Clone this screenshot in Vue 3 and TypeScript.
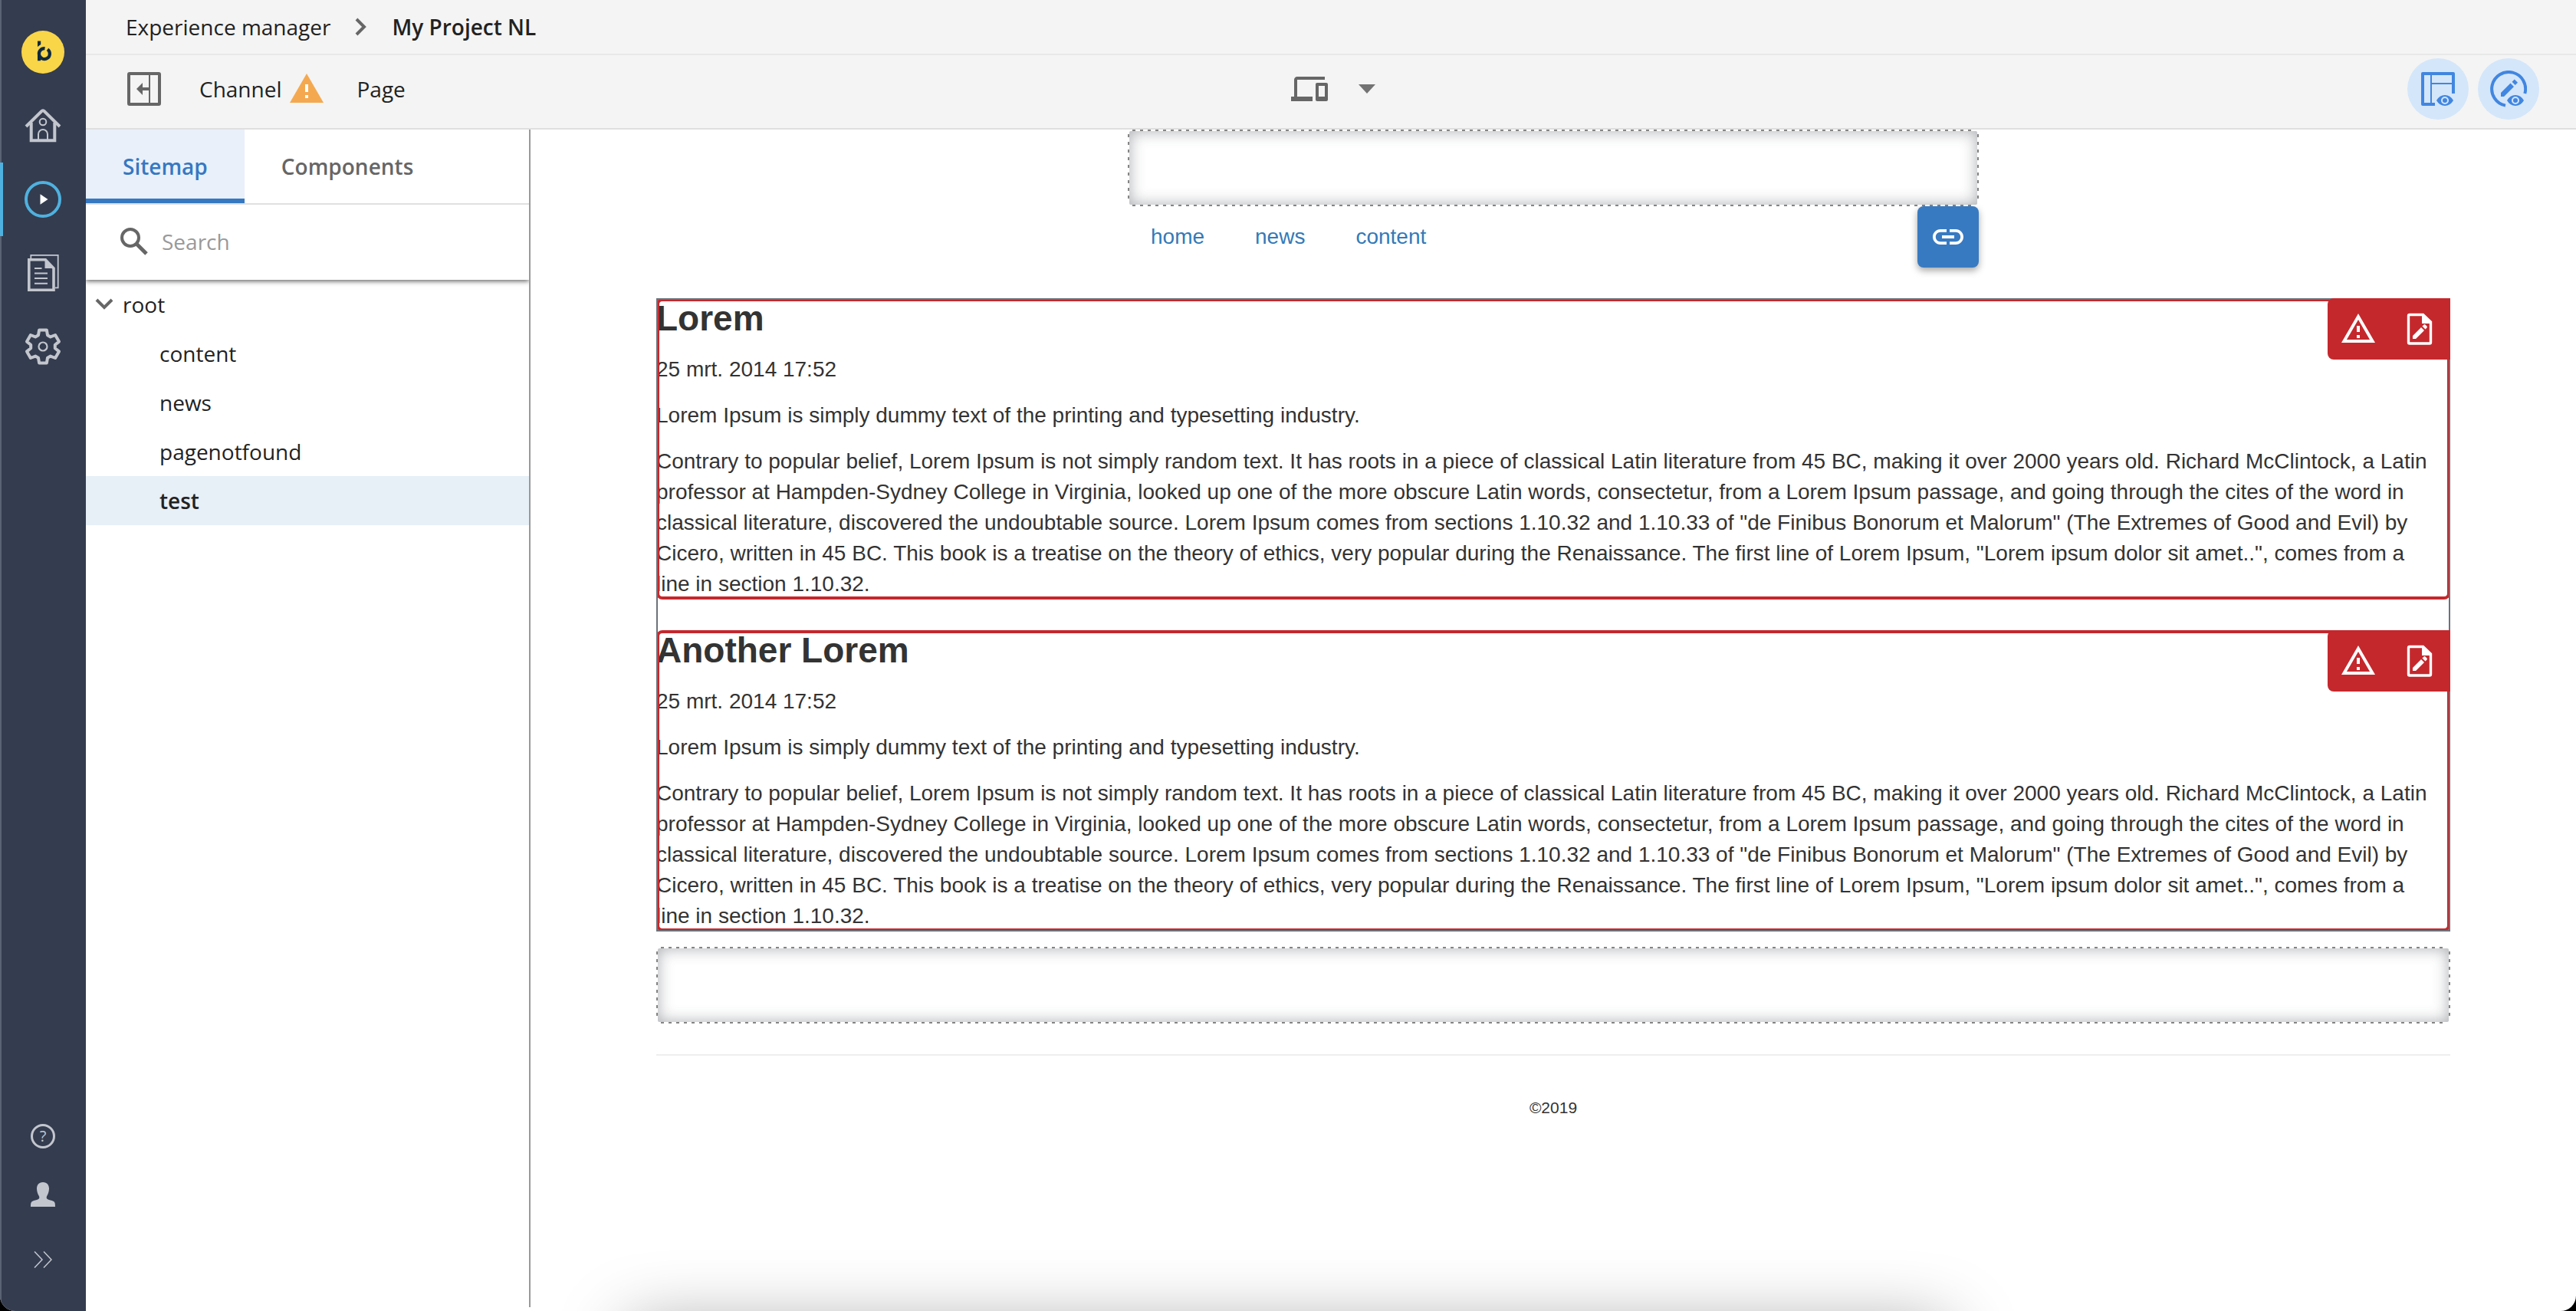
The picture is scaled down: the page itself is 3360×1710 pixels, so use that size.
<script setup lang="ts">
import { ref } from 'vue'

interface TreeItem {
  name: string
  level: number
}

interface Article {
  title: string
  date: string
  intro: string
  body: string
}

const tree: TreeItem[] = [
  { name: 'root', level: 0 },
  { name: 'content', level: 1 },
  { name: 'news', level: 1 },
  { name: 'pagenotfound', level: 1 },
  { name: 'test', level: 1 },
]
const selected = ref('test')
const tabs = ['Sitemap', 'Components']
const activeTab = ref('Sitemap')
const query = ref('')
const menu = ['home', 'news', 'content']

const body =
  'Contrary to popular belief, Lorem Ipsum is not simply random text. It has roots in a piece of classical Latin literature from 45 BC, making it over 2000 years old. Richard McClintock, a Latin professor at Hampden-Sydney College in Virginia, looked up one of the more obscure Latin words, consectetur, from a Lorem Ipsum passage, and going through the cites of the word in classical literature, discovered the undoubtable source. Lorem Ipsum comes from sections 1.10.32 and 1.10.33 of "de Finibus Bonorum et Malorum" (The Extremes of Good and Evil) by Cicero, written in 45 BC. This book is a treatise on the theory of ethics, very popular during the Renaissance. The first line of Lorem Ipsum, "Lorem ipsum dolor sit amet..", comes from a line in section 1.10.32.'

const articles: Article[] = ['Lorem', 'Another Lorem'].map((title) => ({
  title,
  date: '25 mrt. 2014 17:52',
  intro: 'Lorem Ipsum is simply dummy text of the printing and typesetting industry.',
  body,
}))

// Outline of a six-toothed gear centred in a 48-unit box.
const gearPath = (() => {
  const points: string[] = []
  const at = (radius: number, degrees: number) => {
    const a = ((degrees - 90) * Math.PI) / 180
    points.push(`${(24 + radius * Math.cos(a)).toFixed(1)} ${(24 + radius * Math.sin(a)).toFixed(1)}`)
  }
  for (let tooth = 0; tooth < 6; tooth++) {
    const c = tooth * 60
    at(16, c - 22)
    at(22, c - 13)
    at(22, c + 13)
    at(16, c + 22)
  }
  return `M${points.join('L')}Z`
})()
</script>

<template>
  <div class="app">
    <nav class="rail" aria-label="Main">
      <a class="logo" href="#" aria-label="Home page">
        <svg width="56" height="56" viewBox="0 0 56 56">
          <circle cx="28" cy="28" r="28" fill="#f9d548" />
          <path d="M21 13.5h4.2v4.6L21 21z" fill="#0f2a40" />
          <path d="M21 30v9.2h4v-2z" fill="#0f2a40" />
          <path d="M30.5 23.1A7 7 0 1 0 34 24.4" fill="none" stroke="#0f2a40" stroke-width="4.2" />
        </svg>
      </a>
      <button class="rail-item" type="button" aria-label="Home">
        <svg width="48" height="48" viewBox="0 0 48 48" fill="none" stroke="#c3c6cd">
          <path d="M2 25L22.500 4.800q1.500-1 3 0L46 25" stroke-width="4" />
          <path d="M8.700 20v23.200h30.600V20" stroke-width="4" />
          <circle cx="24" cy="19" r="4.300" stroke-width="2" />
          <path d="M18 45V35a6 6 0 0 1 12 0v10" stroke-width="2" />
        </svg>
      </button>
      <button class="rail-item active" type="button" aria-label="Experience manager">
        <svg width="48" height="48" viewBox="0 0 48 48">
          <circle cx="24" cy="24" r="22" fill="none" stroke="#4fb1df" stroke-width="4" />
          <path d="M20.500 17.300L30.500 24l-10 6.700z" fill="#fff" />
        </svg>
      </button>
      <button class="rail-item" type="button" aria-label="Documents">
        <svg width="48" height="48" viewBox="0 0 48 48" fill="none" stroke="#c3c6cd">
          <path d="M8.300 5V.900h35.400v42.500H40" stroke-width="1.800" />
          <path d="M5.800 6.800h21.500l10.700 11.200v28.200H5.800z" stroke-width="3.600" />
          <path d="M26.500 6v12H38z" fill="#c3c6cd" stroke="none" />
          <path d="M13 18h9.500M13 24.500h17M13 31h17M13 37.700h17" stroke-width="2" />
        </svg>
      </button>
      <button class="rail-item" type="button" aria-label="Setup">
        <svg width="48" height="48" viewBox="0 0 48 48" fill="none" stroke="#c3c6cd" stroke-linejoin="round">
          <path :d="gearPath" stroke-width="4" />
          <circle cx="24" cy="24" r="5.500" stroke-width="2.200" />
        </svg>
      </button>
      <div class="rail-bottom">
        <button class="help" type="button" aria-label="Help">?</button>
        <button class="rail-small" type="button" aria-label="User">
          <svg width="32" height="32" viewBox="0 0 32 32" fill="#c3c6cd">
            <path d="M16 0c5.500 0 8 3.800 8 8.500 0 4-1.600 7.300-2.800 9.500-.9 1.700-.7 3.500 1 4.300 2.200 1.100 5 1.500 7.300 2.500 2 .9 2.500 2.500 2.500 7.200H0c0-4.700.5-6.300 2.500-7.200 2.300-1 5.100-1.400 7.300-2.500 1.700-.8 1.900-2.600 1-4.300C9.600 15.800 8 12.500 8 8.500 8 3.800 10.500 0 16 0z" />
          </svg>
        </button>
        <button class="rail-small expand" type="button" aria-label="Expand">
          <svg width="24" height="22" viewBox="0 0 24 22" fill="none" stroke="#c3c6cd" stroke-width="1.500">
            <path d="M1 .500L11 11 1 21.500M13 .500L23 11 13 21.500" />
          </svg>
        </button>
      </div>
    </nav>

    <div class="workspace">
      <header class="breadcrumb">
        <a href="#">Experience manager</a>
        <svg width="16" height="24" viewBox="0 0 16 24" fill="none" stroke="#666" stroke-width="4">
          <path d="M2 2l10 10L2 22" />
        </svg>
        <strong>My Project NL</strong>
      </header>

      <div class="toolbar">
        <div class="toolbar-left">
          <button type="button" aria-label="Collapse panel">
            <svg width="44" height="44" viewBox="0 0 44 44">
              <rect x="2" y="2" width="40" height="40" rx="1" fill="none" stroke="#666" stroke-width="4" />
              <path d="M28 4h2v36h-2z" fill="#666" />
              <path d="M12 22l8-8v6h8v4h-8v6z" fill="#666" />
            </svg>
          </button>
          <button class="menu-button channel" type="button">
            Channel
            <svg width="48" height="48" viewBox="0 0 24 24">
              <path d="M12 2L1 21h22z" fill="#f4a950" />
              <path d="M11 9h2v5h-2zM11 16h2v2h-2z" fill="#fff" />
            </svg>
          </button>
          <button class="menu-button" type="button">Page</button>
        </div>
        <button class="device" type="button" aria-label="Viewport">
          <svg width="48" height="48" viewBox="0 0 24 24" fill="#666">
            <path d="M4 6h18V4H4c-1.100 0-2 .900-2 2v11H0v3h14v-3H4V6zm19 2h-6c-.550 0-1 .450-1 1v10c0 .550.450 1 1 1h6c.550 0 1-.450 1-1V9c0-.550-.450-1-1-1zm-1 9h-4v-7h4v7z" />
          </svg>
          <svg width="22" height="12" viewBox="0 0 22 12" fill="#737373"><path d="M0 0h22L11 12z" /></svg>
        </button>
        <div class="toolbar-right">
          <button class="toggle" type="button" aria-label="Show components">
            <svg width="48" height="48" viewBox="0 0 48 48">
              <path d="M44 30V4H4v40h16" fill="none" stroke="#4186e0" stroke-width="4" stroke-linejoin="round" />
              <path d="M14 5h2v38h-2zM16 16h27v2H16z" fill="#4186e0" />
              <path d="M22 39q4-7 11-7t11 7q-4 7-11 7t-11-7z" fill="#4186e0" />
              <circle cx="33" cy="39" r="4" fill="none" stroke="#d4e6fa" stroke-width="2" />
            </svg>
          </button>
          <button class="toggle" type="button" aria-label="Show content editing">
            <svg width="48" height="48" viewBox="0 0 48 48">
              <path d="M45.300 30A22 22 0 1 0 20 45.600" fill="none" stroke="#4186e0" stroke-width="4" />
              <path d="M14 34v-5l12.500-12.500 4.500 4.500L18 34zM28.500 14.800l3.300-3.300 4.200 4.200-3.300 3.300z" fill="#4186e0" />
              <path d="M22 39q4-7 11-7t11 7q-4 7-11 7t-11-7z" fill="#4186e0" />
              <circle cx="33" cy="39" r="4" fill="none" stroke="#d4e6fa" stroke-width="2" />
            </svg>
          </button>
        </div>
      </div>

      <div class="columns">
        <aside class="panel">
          <div class="tabs" role="tablist">
            <button
              v-for="tab in tabs"
              :key="tab"
              type="button"
              role="tab"
              class="tab"
              :class="{ current: tab === activeTab }"
              :aria-selected="tab === activeTab"
              @click="activeTab = tab"
            >
              {{ tab }}
            </button>
          </div>
          <label class="search">
            <svg width="36" height="36" viewBox="0 0 36 36" fill="none" stroke="#666">
              <circle cx="13" cy="13" r="11" stroke-width="4" />
              <path d="M21 21l13 13" stroke-width="5" />
            </svg>
            <input v-model="query" type="text" placeholder="Search" aria-label="Search" />
          </label>
          <ul class="tree">
            <li v-for="item in tree" :key="item.name">
              <button
                type="button"
                :class="['node', 'level-' + item.level, { selected: item.name === selected }]"
                @click="selected = item.name"
              >
                <svg v-if="item.level === 0" width="24" height="16" viewBox="0 0 24 16" fill="none" stroke="#666" stroke-width="4">
                  <path d="M2 2l10 10L22 2" />
                </svg>
                {{ item.name }}
              </button>
            </li>
          </ul>
        </aside>

        <main class="preview">
          <div class="site-head">
            <div class="drop-area"><div class="drop-inner"></div></div>
            <nav class="site-menu" aria-label="Site">
              <a v-for="entry in menu" :key="entry" href="#">{{ entry }}</a>
              <button class="link-button" type="button" aria-label="Edit menu">
                <svg width="48" height="48" viewBox="0 0 24 24" fill="#fff">
                  <path d="M3.900 12c0-1.710 1.390-3.100 3.100-3.100h4V7H7c-2.760 0-5 2.240-5 5s2.240 5 5 5h4v-1.900H7c-1.710 0-3.100-1.390-3.100-3.100zM8 13h8v-2H8v2zm9-6h-4v1.900h4c1.710 0 3.100 1.390 3.100 3.100s-1.390 3.100-3.100 3.100h-4V17h4c2.760 0 5-2.240 5-5s-2.240-5-5-5z" />
                </svg>
              </button>
            </nav>
          </div>

          <div class="site">
            <section class="container-box">
              <article v-for="article in articles" :key="article.title" class="article">
                <h2>{{ article.title }}</h2>
                <p>{{ article.date }}</p>
                <p>{{ article.intro }}</p>
                <p>{{ article.body }}</p>
                <div class="article-frame"></div>
                <div class="article-actions">
                  <button type="button" aria-label="Show problem">
                    <svg width="48" height="48" viewBox="0 0 24 24" fill="#fff">
                      <path d="M12 5.990L19.530 19H4.470L12 5.990M12 2L1 21h22L12 2zm1 14h-2v2h2v-2zm0-6h-2v4h2v-4z" />
                    </svg>
                  </button>
                  <button type="button" aria-label="Edit content">
                    <svg width="48" height="48" viewBox="0 0 48 48" fill="#fff">
                      <path d="M11 5.500h17.500L38.500 15v26.500a1.500 1.500 0 0 1-1.500 1.500H11a1.500 1.500 0 0 1-1.500-1.500V7A1.500 1.500 0 0 1 11 5.500z" fill="none" stroke="#fff" stroke-width="3.400" />
                      <path d="M27 5v12h12z" />
                      <path d="M15 37v-4l11-11 4 4-11 11zM27.500 20.500l2-2q1-.800 2 0l2 2q.800 1 0 2l-2 2z" />
                    </svg>
                  </button>
                </div>
              </article>
            </section>
            <div class="drop-area"><div class="drop-inner"></div></div>
            <footer>©2019</footer>
          </div>
        </main>
      </div>
    </div>
    <div class="dock-shadow"></div>
  </div>
</template>

<style>
body {
  margin: 0;
  background: #000;
}
</style>

<style scoped>
* {
  box-sizing: border-box;
}
button {
  display: block;
  margin: 0;
  padding: 0;
  border: 0;
  background: none;
  font: inherit;
  color: inherit;
  cursor: pointer;
}
svg {
  display: block;
  flex: none;
}
a {
  color: inherit;
  text-decoration: none;
}
.app {
  position: relative;
  display: flex;
  min-height: 100vh;
  overflow: hidden;
  border-radius: 0 0 20px 20px;
  background: #fff;
  color: #222;
  font: 28px/40px "Open Sans", "Noto Sans", sans-serif;
}

/* Navigation rail */
.rail {
  display: flex;
  flex-direction: column;
  align-items: stretch;
  flex: none;
  width: 112px;
  padding-top: 40px;
  background: #343c4f;
  box-shadow: inset 2px 0 #5a6374;
}
.logo {
  align-self: center;
  margin-bottom: 20px;
}
.rail-item {
  display: grid;
  place-items: center;
  height: 96px;
}
.rail-item.active {
  box-shadow: inset 4px 0 #4fb1df;
}
.rail-bottom {
  display: flex;
  flex-direction: column;
  align-items: center;
  margin-top: auto;
  padding-bottom: 56px;
}
.help {
  width: 32px;
  height: 32px;
  margin-bottom: 44px;
  border: 3px solid #c3c6cd;
  border-radius: 50%;
  color: #c3c6cd;
  font-size: 20px;
  line-height: 26px;
}
.rail-small {
  margin-bottom: 58px;
}
.rail-small.expand {
  margin-bottom: 0;
}

/* Header bars */
.workspace {
  display: flex;
  flex: 1;
  flex-direction: column;
  min-width: 0;
}
.breadcrumb {
  display: flex;
  align-items: center;
  height: 72px;
  padding-left: 52px;
  border-bottom: 2px solid #e8e8e8;
  background: #f4f4f4;
}
.breadcrumb svg {
  margin: 0 32px;
}
.breadcrumb strong {
  font-weight: 600;
}
.toolbar {
  display: grid;
  grid-template-columns: 1fr auto 1fr;
  align-items: center;
  height: 97px;
  padding: 0 48px 7px 54px;
  border-bottom: 2px solid #dfdfdf;
  background: #f4f4f4;
}
.toolbar-left {
  display: flex;
  align-items: center;
}
.menu-button {
  display: flex;
  align-items: center;
  margin-left: 42px;
}
.channel {
  gap: 8px;
  margin-left: 50px;
}
.device {
  display: flex;
  align-items: center;
  gap: 40px;
}
.toolbar-right {
  display: flex;
  justify-content: flex-end;
  gap: 12px;
}
.toggle {
  display: grid;
  place-items: center;
  width: 80px;
  height: 80px;
  border-radius: 50%;
  background: #d4e6fa;
}

/* Side panel */
.columns {
  display: flex;
  flex: 1;
}
.panel {
  flex: none;
  width: 580px;
  margin-bottom: 5px;
  border-right: 2px solid #999;
}
.tabs {
  display: flex;
  height: 98px;
  border-bottom: 2px solid #e0e0e0;
}
.tab {
  padding: 0 48px;
  color: #666;
  font-weight: 600;
}
.tab.current {
  background: #e9f0f9;
  box-shadow: inset 0 -6px #3678c2;
  color: #3678c2;
}
.search {
  display: flex;
  align-items: center;
  gap: 18px;
  height: 98px;
  padding: 0 0 2px 45px;
  box-shadow: 0 2px 6px rgba(0, 0, 0, 0.6);
  clip-path: inset(0 0 -10px 0);
}
.search input {
  flex: 1;
  min-width: 0;
  padding: 0;
  border: 0;
  outline: 0;
  background: none;
  color: #222;
  font: inherit;
}
.search input::placeholder {
  color: #999;
  opacity: 1;
}
.tree {
  margin: 0;
  padding: 0;
  list-style: none;
}
.node {
  display: flex;
  align-items: center;
  gap: 12px;
  width: 100%;
  height: 64px;
  padding-left: 96px;
}
.node.level-0 {
  padding-left: 12px;
}
.node.selected {
  background: #e7eff7;
  font-weight: 600;
}

/* Page preview */
.preview {
  flex: 1;
  min-width: 0;
  color: #333;
  font-family: "Liberation Sans", Arial, sans-serif;
}
.site-head {
  max-width: 1110px;
  margin: 0 auto 40px;
}
.drop-area {
  height: 100px;
  padding: 2px;
  background:
    repeating-linear-gradient(90deg, #858585 0 4px, transparent 4px 10px) 6px 0 / calc(100% - 10px) 2px no-repeat,
    repeating-linear-gradient(90deg, #858585 0 4px, transparent 4px 10px) 6px 100% / calc(100% - 10px) 2px no-repeat,
    repeating-linear-gradient(#858585 0 4px, transparent 4px 10px) 0 6px / 2px calc(100% - 10px) no-repeat,
    repeating-linear-gradient(#858585 0 4px, transparent 4px 10px) 100% 6px / 2px calc(100% - 10px) no-repeat;
}
.drop-inner {
  height: 100%;
  border-radius: 2px;
  box-shadow: inset 0 0 20px rgba(60, 66, 74, 0.44);
}
.site-menu {
  display: flex;
  align-items: center;
  gap: 66px;
  height: 80px;
  padding-left: 30px;
  color: #337ab7;
}
.link-button {
  display: grid;
  place-items: center;
  width: 80px;
  height: 80px;
  margin-left: auto;
  border-radius: 8px;
  background: #387ac1;
  box-shadow: 0 4px 10px rgba(0, 0, 0, 0.35);
}
.site {
  max-width: 2340px;
  margin: 0 auto;
}
.container-box {
  position: relative;
  display: flex;
  flex-direction: column;
  gap: 40px;
  margin-bottom: 20px;
}
.container-box::after {
  content: "";
  position: absolute;
  inset: 0;
  border: 2px solid #6b727b;
  pointer-events: none;
}
.article {
  position: relative;
}
.article h2 {
  margin: 0 0 20px;
  font-size: 46px;
  font-weight: 700;
  line-height: 53px;
}
.article p {
  margin: 0 0 20px;
  padding-right: 16px;
}
.article p:last-of-type {
  margin: 0;
}
.article-frame {
  position: absolute;
  inset: 0;
  border: 4px solid #c4282d;
  border-radius: 8px;
  pointer-events: none;
}
.article-actions {
  position: absolute;
  z-index: 1;
  top: 0;
  right: 0;
  display: flex;
  border-radius: 8px 0 0 8px;
  background: #c4282d;
}
.article-actions button {
  display: grid;
  place-items: center;
  width: 80px;
  height: 80px;
}
footer {
  margin-top: 40px;
  padding-top: 48px;
  border-top: 2px solid #eee;
  font-size: 21px;
  text-align: center;
}

/* Shade cast over the lower edge of the window by the system dock */
.dock-shadow {
  position: absolute;
  top: 100%;
  right: 820px;
  left: 820px;
  height: 80px;
  margin-top: 20px;
  box-shadow: 0 0 90px rgba(0, 0, 0, 0.38);
  pointer-events: none;
}
</style>
